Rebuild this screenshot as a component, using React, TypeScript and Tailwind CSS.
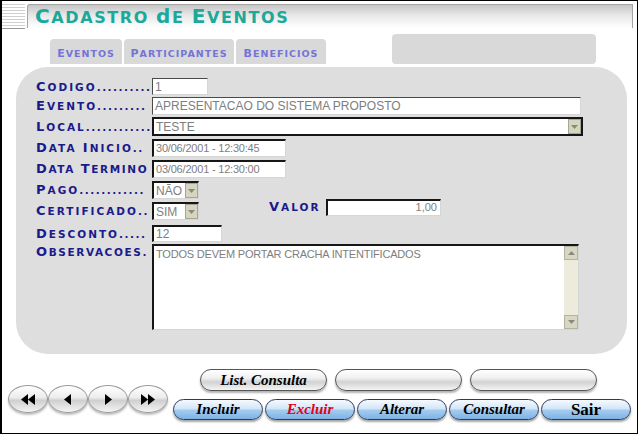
import React from 'react'

// fake small caps: first letter of each word bigger, rest upper-cased smaller
const SC = ({ text, big, small }: { text: string; big: string; small: string }) => (
  <>
    {text.split(' ').map((w, i) => (
      <React.Fragment key={i}>
        {i > 0 && ' '}
        <span className={big}>{w[0]}</span>
        <span className={small}>{w.slice(1).toUpperCase()}</span>
      </React.Fragment>
    ))}
  </>
)

const Label = ({ name, dots = 0, tight }: { name: string; dots?: number; tight?: boolean }) => (
  <div
    className={
      tight
        ? "flex w-[116px] shrink-0 items-baseline whitespace-nowrap font-['DejaVu_Sans',sans-serif] leading-[14px] font-bold tracking-[1.6px] text-[#1a1a8c]"
        : "flex w-[116px] shrink-0 items-baseline whitespace-nowrap font-['DejaVu_Sans',sans-serif] leading-[14px] font-bold tracking-[2px] text-[#1a1a8c]"
    }
  >
    <span>
      <SC text={name} big="text-[13px]" small="text-[10.5px]" />
    </span>
    {dots > 0 && <span className="text-[10.5px] tracking-[1.5px]">{'.'.repeat(dots)}</span>}
  </div>
)

const fieldBase =
  "flex shrink-0 items-center overflow-hidden whitespace-nowrap bg-white pl-[2px] font-['Liberation_Sans',Arial,sans-serif] leading-none text-[#7e7e7e]"
const thin = 'border border-t-[#4a4a4a] border-l-[#4a4a4a] border-r-[#d6d6d6] border-b-[#d6d6d6]'
const thick =
  'border-t-2 border-l-2 border-r border-b border-t-[#161616] border-l-[#161616] border-r-[#d6d6d6] border-b-[#d6d6d6]'

const Arrow = ({ up }: { up?: boolean }) => (
  <svg width="7" height="4" viewBox="0 0 7 4">
    <path d={up ? 'M0 4 L3.5 0 L7 4 Z' : 'M0 0 L7 0 L3.5 4 Z'} fill="#8a8a7a" />
  </svg>
)

const DropBtn = () => (
  <div className="ml-auto flex h-full w-[13px] shrink-0 items-center justify-center border border-[#a6a593] bg-[#d6d5c0]">
    <Arrow />
  </div>
)

const NavIcon = ({ kind }: { kind: string }) => {
  const tri: Record<string, string> = {
    first: 'M7 0 L0 5.5 L7 11 Z M14 0 L7 5.5 L14 11 Z',
    prev: 'M10 0 L3 5.5 L10 11 Z',
    next: 'M4 0 L11 5.5 L4 11 Z',
    last: 'M0 0 L7 5.5 L0 11 Z M7 0 L14 5.5 L7 11 Z',
  }
  return (
    <svg width="14" height="11" viewBox="0 0 14 11">
      <path d={tri[kind]} fill="#000" />
    </svg>
  )
}

const navCls =
  'flex h-[28px] w-[40px] items-center justify-center rounded-[50%] border border-[#9c9c9c] bg-[linear-gradient(to_bottom,#ffffff_0%,#ececec_45%,#cfcfcf_55%,#f4f4f4_100%)] shadow-[0_2px_2px_rgba(0,0,0,0.25)]'
const silverCls =
  "flex h-[22px] w-[127px] items-center justify-center rounded-full border border-[#555] bg-[linear-gradient(to_bottom,#ffffff_0%,#f0f0f0_40%,#d2d2d2_60%,#f4f4f4_100%)] shadow-[0_2px_2px_rgba(0,0,0,0.3)] font-['Liberation_Serif',serif] text-[15px] font-bold italic text-black"
const blueCls =
  "flex h-[21px] w-[90px] items-center justify-center rounded-full border border-[#2a3b5c] bg-[linear-gradient(to_bottom,#f6fafe_0%,#d3e6f8_45%,#a4cbef_55%,#7db2e6_100%)] shadow-[0_2px_2px_rgba(0,0,0,0.35)] font-['Liberation_Serif',serif] font-bold"

export default function App() {
  return (
    <div className="h-[436px] w-[642px] bg-white">
      <div className="flex h-[434px] w-[638px] flex-col border-t border-r border-b border-l-2 border-black">
        {/* header */}
        <div className="flex h-[30px] shrink-0">
          <div className="mt-[1px] h-[27px] w-[23px] border-b border-[#9a9a9a] bg-[repeating-linear-gradient(to_bottom,#ffffff_0px,#ffffff_2px,#cfcfcf_2px,#cfcfcf_3px)]" />
          <div className="mt-[3px] mr-[4px] ml-[2px] flex h-[24px] flex-1 items-end rounded-tl-[3px] border-t border-r border-l border-[#a4a4a4] bg-[linear-gradient(to_bottom,#c6c6c6_0%,#e8e8e8_45%,#ffffff_100%)] pl-[7px]">
            <span className="font-['DejaVu_Sans',sans-serif] leading-[21px] font-bold tracking-[1.6px] whitespace-nowrap text-[#1aa99a]">
              <SC text="Cadastro de Eventos" big="text-[20px]" small="text-[16px]" />
            </span>
          </div>
        </div>

        {/* tabs */}
        <div className="mt-[3px] flex h-[30px] shrink-0 items-end pl-[48px]">
          {[
            ['Eventos', 'w-[72px]'],
            ['Participantes', 'w-[110px]'],
            ['Beneficios', 'w-[90px]'],
          ].map(([t, w]) => (
            <div key={t} className={`mr-[2px] flex h-[25px] items-center justify-center rounded-t-[4px] bg-[#d9d9d9] ${w}`}>
              <span className="font-['DejaVu_Sans',sans-serif] font-bold tracking-[1px] whitespace-nowrap text-[#7474d8]">
                <SC text={t} big="text-[11px]" small="text-[9.5px]" />
              </span>
            </div>
          ))}
          <div className="ml-[64px] h-[30px] w-[204px] rounded-[4px] bg-[#d9d9d9]" />
        </div>

        {/* panel */}
        <div className="mt-[3px] ml-[14px] flex h-[287px] w-[611px] shrink-0 flex-col rounded-[32px] bg-[#dedede] pt-[11px] pl-[20px] text-[12px]">
          <div className="flex h-[17px] items-center">
            <Label name="Codigo" dots={10} />
            <div className={`${fieldBase} ${thin} h-[17px] w-[56px]`}>1</div>
          </div>
          <div className="mt-[2px] flex h-[18px] items-center">
            <Label name="Evento" dots={9} />
            <div className={`${fieldBase} ${thin} h-[18px] w-[429px]`}>APRESENTACAO DO SISTEMA PROPOSTO</div>
          </div>
          <div className="mt-[2px] flex h-[19px] items-center">
            <Label name="Local" dots={12} />
            <div className={`${fieldBase} h-[19px] w-[431px] border-2 border-[#161616]`}>
              TESTE
              <DropBtn />
            </div>
          </div>
          <div className="mt-[3px] flex h-[18px] items-center">
            <Label name="Data Inicio" dots={2} />
            <div className={`${fieldBase} ${thick} h-[18px] w-[134px] text-[11px] tracking-[-0.2px]`}>30/06/2001 - 12:30:45</div>
          </div>
          <div className="mt-[3px] flex h-[18px] items-center">
            <Label name="Data Termino" tight />
            <div className={`${fieldBase} ${thick} h-[18px] w-[134px] text-[11px] tracking-[-0.2px]`}>03/06/2001 - 12:30:00</div>
          </div>
          <div className="mt-[3px] flex h-[18px] items-center">
            <Label name="Pago" dots={12} />
            <div className={`${fieldBase} ${thick} h-[18px] w-[47px]`}>
              NÃO
              <DropBtn />
            </div>
          </div>
          <div className="mt-[3px] flex h-[18px] items-center">
            <Label name="Certificado" dots={2} />
            <div className={`${fieldBase} ${thick} h-[18px] w-[47px]`}>
              SIM
              <DropBtn />
            </div>
            <div className="mb-[8px] ml-[70px] flex items-center">
              <div className="w-[57px] font-['DejaVu_Sans',sans-serif] leading-[14px] font-bold tracking-[2px] whitespace-nowrap text-[#1a1a8c]">
                <SC text="Valor" big="text-[13px]" small="text-[10.5px]" />
              </div>
              <div className={`${fieldBase} ${thick} h-[17px] w-[115px] justify-end pr-[3px] text-[11px]`}>1,00</div>
            </div>
          </div>
          <div className="mt-[5px] flex h-[17px] items-center">
            <Label name="Desconto" dots={5} />
            <div className={`${fieldBase} ${thick} h-[17px] w-[70px]`}>12</div>
          </div>
          <div className="mt-[2px] flex h-[86px] items-start">
            <div className="mt-[1px]">
              <Label name="Observacoes." tight />
            </div>
            <div className={`${fieldBase} ${thick} h-[86px] w-[427px] items-stretch text-[11px] tracking-[-0.2px]`}>
              <div className="flex-1 pt-[3px]">TODOS DEVEM PORTAR CRACHA INTENTIFICADOS</div>
              <div className="flex w-[14px] shrink-0 flex-col justify-between bg-[#ecebdc]">
                <div className="flex h-[14px] items-center justify-center border border-[#b4b3a0] bg-[#d8d7c3]">
                  <Arrow up />
                </div>
                <div className="flex h-[14px] items-center justify-center border border-[#b4b3a0] bg-[#d8d7c3]">
                  <Arrow />
                </div>
              </div>
            </div>
          </div>
        </div>

        {/* bottom buttons */}
        <div className="mt-[15px] flex pl-[6px]">
          <div className="mt-[16px] flex">
            <div className={navCls}><NavIcon kind="first" /></div>
            <div className={navCls}><NavIcon kind="prev" /></div>
            <div className={navCls}><NavIcon kind="next" /></div>
            <div className={navCls}><NavIcon kind="last" /></div>
          </div>
          <div className="ml-[5px] flex flex-col">
            <div className="flex gap-[8px] pl-[27px]">
              <div className={silverCls}>List. Consulta</div>
              <div className={silverCls} />
              <div className={silverCls} />
            </div>
            <div className="mt-[8px] flex gap-[2px]">
              <div className={`${blueCls} text-[15px] italic text-black`}>Incluir</div>
              <div className={`${blueCls} text-[15px] italic text-[#e0001a]`}>Excluir</div>
              <div className={`${blueCls} text-[15px] italic text-black`}>Alterar</div>
              <div className={`${blueCls} text-[15px] italic text-black`}>Consultar</div>
              <div className={`${blueCls} text-[17px] text-black`}>Sair</div>
            </div>
          </div>
        </div>
      </div>
    </div>
  )
}
